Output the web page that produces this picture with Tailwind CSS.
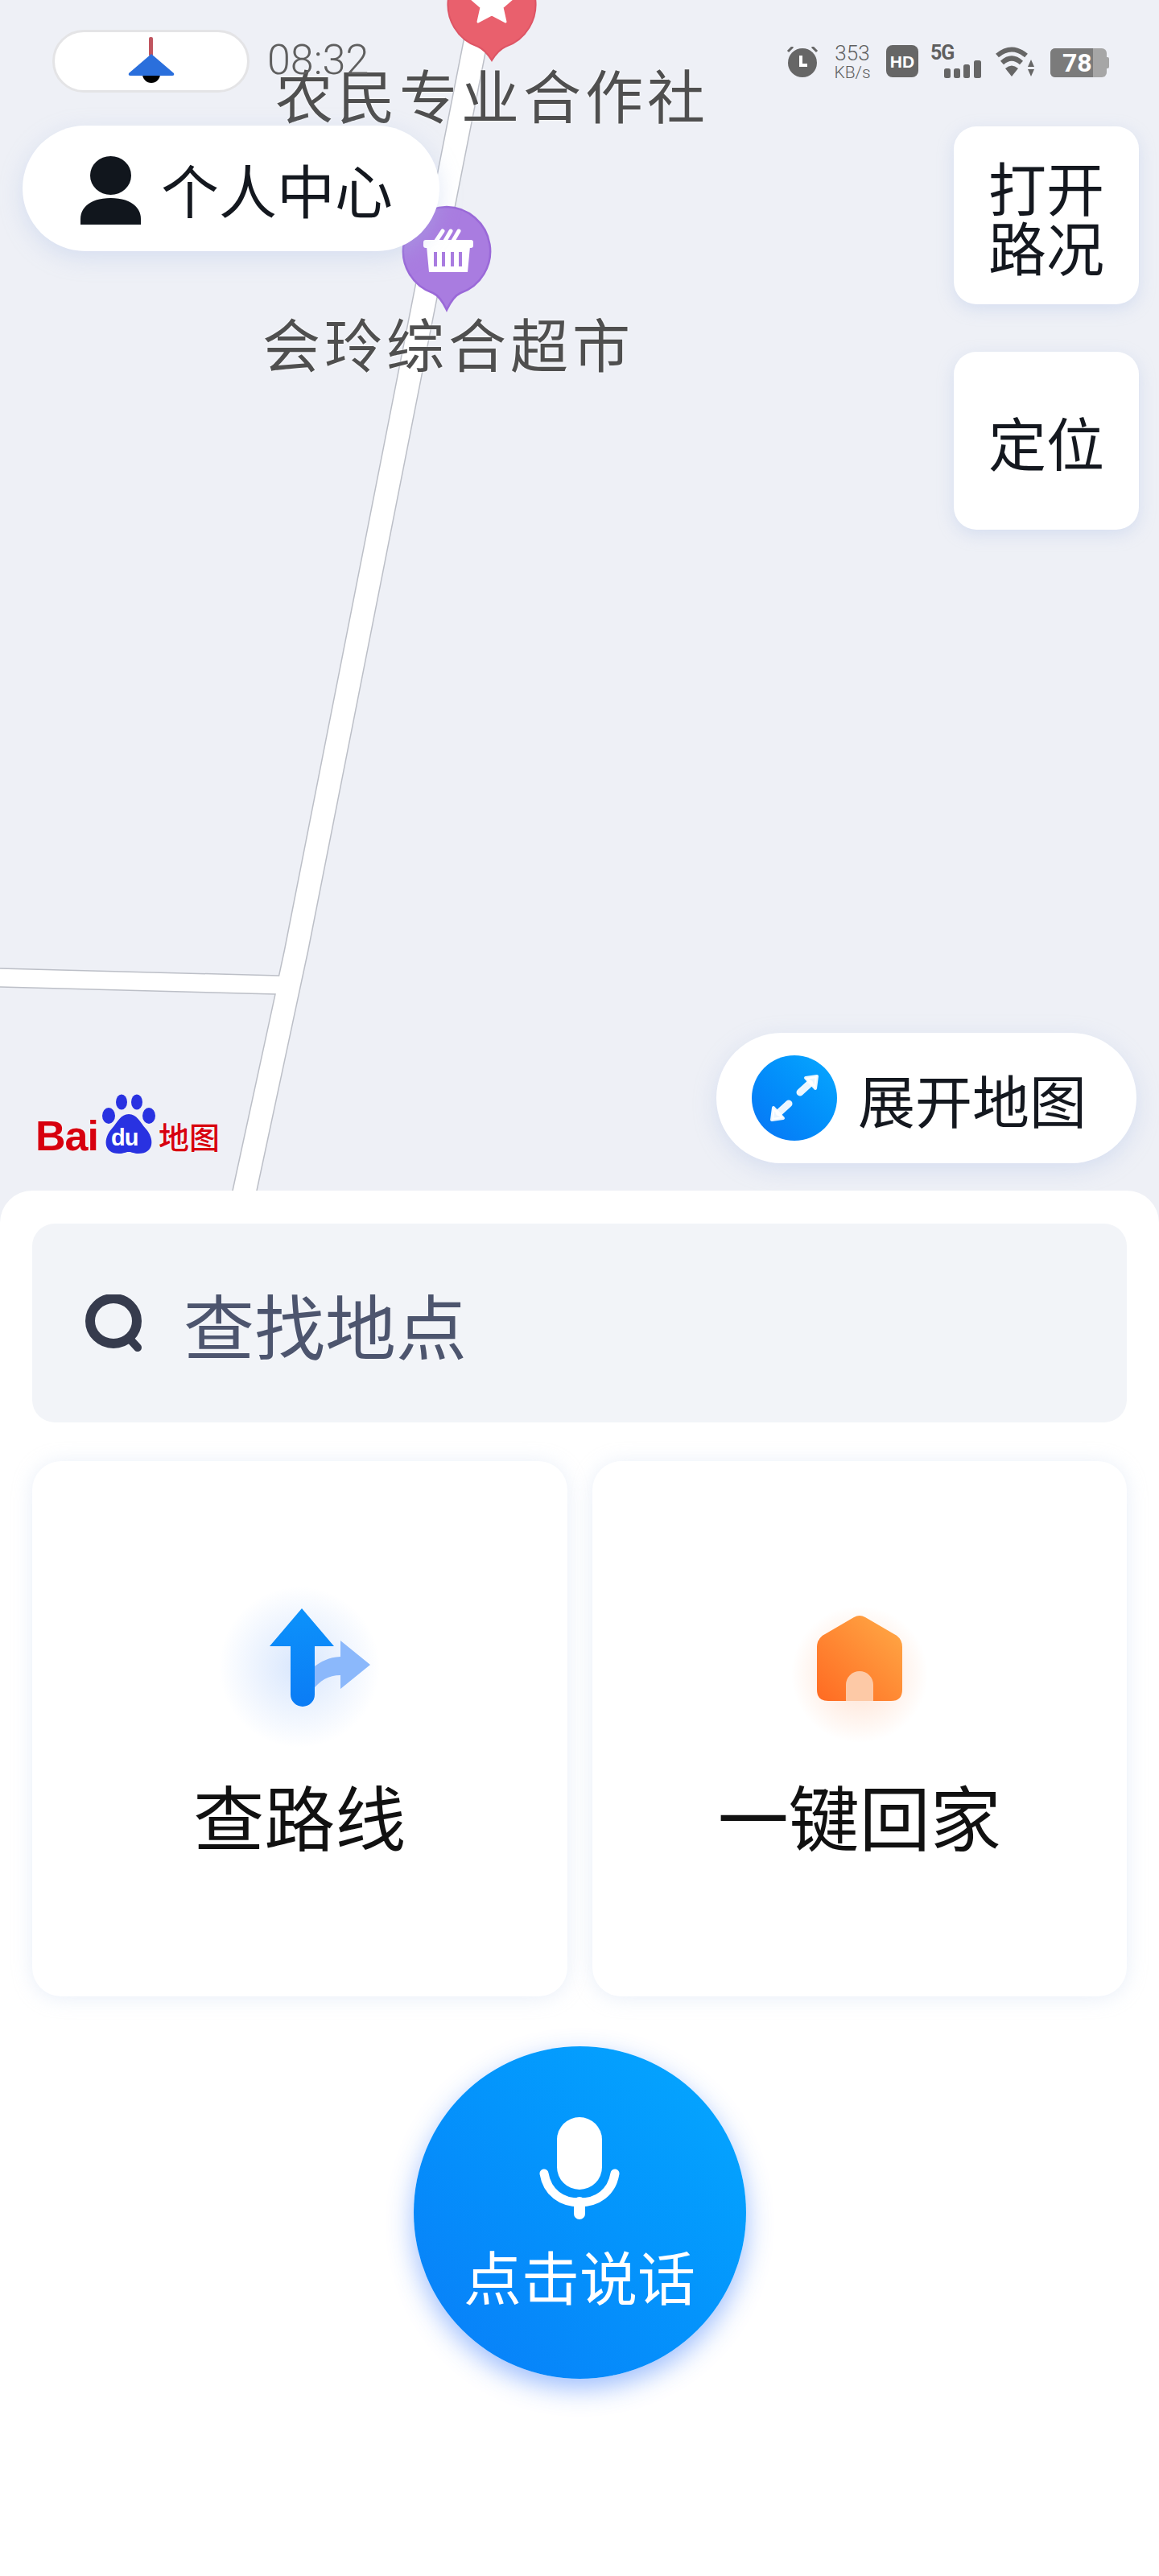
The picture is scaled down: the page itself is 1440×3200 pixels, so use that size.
<!DOCTYPE html>
<html lang="zh-CN">
<head>
    <meta charset="UTF-8">
    <meta name="viewport" content="width=device-width, initial-scale=1.0">
    <title>地图</title>
    <script src="https://cdn.jsdelivr.net/npm/@tailwindcss/browser@4"></script>
</head>
<body class="bg-white">
<div class="w-[1440px] h-[3200px] overflow-hidden bg-white font-['Noto_Sans_CJK_SC',sans-serif]">

    <!-- Map -->
    <div class="relative h-[1520px] bg-[#eef0f6] overflow-hidden">
        <svg class="absolute left-0 top-0" width="1440" height="1520" viewBox="0 0 1440 1520">
            <!-- roads -->
            <polygon points="586,0 616,0 383,1180 319,1479 311,1520 281,1520 289,1479 353.500,1180" fill="#ffffff"/>
            <polygon points="0,1203 352,1212 350,1235 0,1226" fill="#ffffff"/>
            <path d="M586 0 L353.500 1180 L346.600 1212 L0 1203 M0 1226 L342 1235 L289 1479 L281 1520 M616 0 L383 1180 L319 1479 L311 1520" fill="none" stroke="#bcbfc7" stroke-width="1.500"/>
            <!-- red pin -->
            <path d="M611 -50 a55.500 55.500 0 0 1 17 108 q-9 4 -17 17 q-8 -13 -17 -17 a55.500 55.500 0 0 1 17 -108 z" fill="#e9606d" stroke="#dd5565" stroke-width="2"/>
            <polygon points="611,-22 619,-5 638,-3 624,9 628,27 611,18 594,27 598,9 584,-3 603,-5" fill="#ffffff" stroke="#ffffff" stroke-width="3" stroke-linejoin="round"/>
            <!-- purple pin -->
            <path d="M555 257 a55 55 0 0 1 17 107 q-9 4 -17 21 q-8 -17 -17 -21 a55 55 0 0 1 17 -107 z" fill="#a97ce0" stroke="#9a69d8" stroke-width="2.500"/>
            <path d="M542 299 L550 287 M553 299 L560 287 M563 299 L570 287" stroke="#ffffff" stroke-width="5" stroke-linecap="round"/>
            <rect x="526" y="298" width="62" height="10" rx="3" fill="#ffffff"/>
            <path d="M530 306 H584 L581 338 H533 Z" fill="#ffffff"/>
            <path d="M541 313 V331 M551 313 V331 M562 313 V331 M572 313 V331" stroke="#a97ce0" stroke-width="4"/>
        </svg>

        <!-- Map labels -->
        <div class="absolute left-[342px] top-[76px] text-[72px] leading-[80px] tracking-[5px] whitespace-nowrap text-[#4f4f4f] [text-shadow:0_0_3px_#ffffff]">农民专业合作社</div>
        <div class="absolute left-[326px] top-[385px] text-[72px] leading-[80px] tracking-[5px] whitespace-nowrap text-[#4f4f4f] [text-shadow:0_0_3px_#ffffff]">会玲综合超市</div>

        <!-- Status bar -->
        <div class="absolute left-[65px] top-[37px] w-[245px] h-[78px] rounded-full bg-white border-[3px] border-[#e4e4e6] flex items-center justify-center">
            <svg width="60" height="60" viewBox="0 0 60 60">
                <rect x="27" y="0" width="5" height="24" rx="2" fill="#c0555f"/>
                <circle cx="30" cy="46" r="11" fill="#000000"/>
                <path d="M30 21 L58 45 Q59 48 56 48 H4 Q1 48 2 45 Z" fill="#2a6fdc"/>
            </svg>
        </div>
        <div class="absolute left-[332px] top-[46px] font-['Roboto'] font-light text-[52px] leading-[58px] text-[#5f5f5f]">08:32</div>

        <div class="absolute left-[977px] top-[54px] flex items-start text-[#5f5f5f]">
            <!-- alarm -->
            <svg class="mt-[4px]" width="40" height="38" viewBox="0 0 40 38">
                <circle cx="20" cy="20" r="18" fill="#666666"/>
                <path d="M2 6 L8 0 M38 6 L32 0" stroke="#666666" stroke-width="3"/>
                <path d="M18 11 V23 H26" fill="none" stroke="#ffffff" stroke-width="4"/>
            </svg>
            <div class="ml-[18px] w-[48px] flex flex-col items-center font-['Roboto'] font-light">
                <span class="text-[26px] leading-[24px]">353</span>
                <span class="text-[21px] leading-[22px] mt-[1px]">KB/s</span>
            </div>
            <div class="ml-[18px] mt-[2px] w-[40px] h-[40px] rounded-[8px] bg-[#666666] flex items-center justify-center text-white font-['Liberation_Sans'] font-bold text-[21px] leading-none">HD</div>
            <div class="relative ml-[15px] w-[63px] h-[42px]">
                <span class="absolute left-0 top-0 font-['Roboto'] font-bold text-[25px] leading-[24px] tracking-[-1px]">5G</span>
                <svg class="absolute left-[17px] top-[21px]" width="46" height="22" viewBox="0 0 46 22">
                    <rect x="0" y="10" width="8" height="12" rx="2.500" fill="#666666"/>
                    <rect x="12" y="10" width="8" height="12" rx="2.500" fill="#666666"/>
                    <rect x="24" y="5" width="8" height="17" rx="2.500" fill="#666666"/>
                    <rect x="37" y="0" width="9" height="22" rx="2.500" fill="#666666"/>
                </svg>
            </div>
            <!-- wifi -->
            <svg class="ml-[18px] mt-[4px]" width="48" height="38" viewBox="0 0 48 38">
                <path d="M2 11 Q20 -4 38 11 M8 20 Q20 9 32 20" fill="none" stroke="#666666" stroke-width="6"/>
                <path d="M12 27 Q20 20 28 27 L20 37 Z" fill="#666666"/>
                <path d="M44 16 L48 25 H40 Z M40 28 H48 L44 37 Z" fill="#666666"/>
            </svg>
            <!-- battery -->
            <div class="ml-[20px] mt-[6px] flex items-center">
                <div class="relative w-[70px] h-[36px] rounded-[6px] bg-[#a6a6a6] overflow-hidden">
                    <div class="w-[53px] h-full bg-[#7b7b7b]"></div>
                    <span class="absolute left-[15px] top-0 font-['Roboto'] font-bold text-[32px] leading-[36px] text-white">78</span>
                </div>
                <div class="w-[3px] h-[14px] rounded-r-[2px] bg-[#a6a6a6]"></div>
            </div>
        </div>

        <!-- 个人中心 -->
        <div class="absolute left-[28px] top-[156px] w-[518px] h-[156px] rounded-full bg-white shadow-[0_8px_28px_rgba(170,190,230,0.35)] flex items-center pl-[72px] gap-[25px] text-[72px] leading-none text-[#14181f]">
            <svg class="mt-[5px]" width="75" height="85" viewBox="0 0 75 85">
                <ellipse cx="37.500" cy="24" rx="25.500" ry="24" fill="#11161d"/>
                <path d="M0 85 V78 C0 62 15 52 37.500 52 C60 52 75 62 75 78 V85 Z" fill="#11161d"/>
            </svg>
            <span>个人中心</span>
        </div>

        <!-- Right buttons -->
        <div class="absolute left-[1185px] top-[157px] flex flex-col gap-[59px]">
            <div class="w-[230px] h-[221px] rounded-[28px] bg-white shadow-[0_6px_20px_rgba(170,190,230,0.35)] flex items-center justify-center text-center text-[72px] leading-[74px] text-[#14181f]">打开<br>路况</div>
            <div class="w-[230px] h-[221px] rounded-[28px] bg-white shadow-[0_6px_20px_rgba(170,190,230,0.35)] flex items-center justify-center text-[72px] leading-[75px] text-[#14181f]">定位</div>
        </div>

        <!-- Baidu logo -->
        <div class="absolute left-[44px] top-[1358px] w-[232px] h-[76px] [text-shadow:0_0_3px_#ffffff]">
            <span class="absolute left-0 top-[30px] font-['Liberation_Sans'] font-bold text-[52px] leading-[46px] tracking-[-1px] text-[#d7000f]">Bai</span>
            <svg class="absolute left-[82px] top-0" width="68" height="76" viewBox="0 0 68 76">
                <ellipse cx="25" cy="11" rx="7" ry="9.500" fill="#2932e1"/>
                <ellipse cx="44" cy="11" rx="7" ry="9.500" fill="#2932e1"/>
                <ellipse cx="9" cy="28" rx="8" ry="10" fill="#2932e1"/>
                <ellipse cx="59" cy="28" rx="8" ry="10" fill="#2932e1"/>
                <path d="M34 26 C44 26 48 36 55 44 C66 56 66 75 46 75 C40 75 38 73 34 73 C30 73 28 75 22 75 C2 75 2 56 13 44 C20 36 24 26 34 26 Z" fill="#2932e1"/>
            </svg>
            <span class="absolute left-[94px] top-[41px] font-['Liberation_Sans'] font-bold text-[29px] leading-[28px] tracking-[-1px] text-white [text-shadow:none]">du</span>
            <span class="absolute left-[153px] top-[30px] font-medium text-[38px] leading-[46px] text-[#d7000f]">地图</span>
        </div>

        <!-- 展开地图 -->
        <div class="absolute left-[890px] top-[1283px] w-[522px] h-[162px] rounded-full bg-white shadow-[0_8px_28px_rgba(170,190,230,0.35)] flex items-center pl-[44px] gap-[26px] text-[71px] leading-none text-[#14181f]">
            <div class="w-[106px] h-[106px] rounded-full bg-gradient-to-bl from-[#0aa8ff] to-[#0a74f5] flex items-center justify-center">
                <svg width="106" height="106" viewBox="0 0 106 106">
                    <path d="M60 46 L72 35 M46 60 L34 71" fill="none" stroke="#ffffff" stroke-opacity="0.92" stroke-width="9" stroke-linecap="round"/>
                    <path d="M67 28 L81 26 L79 41 Z M39 78 L25 80 L27 65 Z" fill="#ffffff" fill-opacity="0.92" stroke="#ffffff" stroke-opacity="0.92" stroke-width="4" stroke-linejoin="round"/>
                </svg>
            </div>
            <span>展开地图</span>
        </div>
    </div>

    <!-- Bottom sheet -->
    <div class="relative -mt-[41px] rounded-t-[40px] bg-white px-[40px] pt-[41px]">
        <div class="h-[247px] rounded-[28px] bg-[#f2f4f8] flex items-center pl-[66px] gap-[50px]">
            <svg width="72" height="72" viewBox="0 0 72 72">
                <ellipse cx="35" cy="33" rx="29" ry="28" fill="none" stroke="#363b4d" stroke-width="12"/>
                <path d="M54 54 L65 66" stroke="#363b4d" stroke-width="10" stroke-linecap="round"/>
            </svg>
            <span class="text-[88px] leading-none text-[#4d556e]">查找地点</span>
        </div>

        <div class="mt-[48px] grid grid-cols-2 gap-[31px]">
            <!-- 查路线 -->
            <div class="h-[665px] rounded-[36px] bg-white shadow-[0_2px_24px_rgba(190,205,235,0.35)] flex flex-col items-center">
                <svg class="mt-[106px]" width="300" height="280" viewBox="0 0 300 280">
                    <defs>
                        <radialGradient id="routeGlow">
                            <stop offset="0" stop-color="#4d8ff5" stop-opacity="0.22"/>
                            <stop offset="1" stop-color="#4d8ff5" stop-opacity="0"/>
                        </radialGradient>
                        <linearGradient id="routeArrow" x1="0" y1="0" x2="0" y2="1">
                            <stop offset="0" stop-color="#0c92fb"/>
                            <stop offset="1" stop-color="#0b7cf5"/>
                        </linearGradient>
                    </defs>
                    <circle cx="150" cy="150" r="100" fill="url(#routeGlow)"/>
                    <path d="M165 152 C178 142 186 138 201 137 V117 L238 147 L201 177 V160 C186 160 176 166 165 180 Z" fill="#8bb8fb"/>
                    <path d="M153 77 L193 124 H169 V184 A15 15 0 0 1 139 184 V124 H113 Z" fill="url(#routeArrow)"/>
                </svg>
                <span class="mt-[3px] text-[88px] leading-[100px] text-[#111111]">查路线</span>
            </div>
            <!-- 一键回家 -->
            <div class="h-[665px] rounded-[36px] bg-white shadow-[0_2px_24px_rgba(190,205,235,0.35)] flex flex-col items-center">
                <svg class="mt-[100px]" width="300" height="280" viewBox="0 0 300 280">
                    <defs>
                        <radialGradient id="homeGlow">
                            <stop offset="0" stop-color="#ff8a4a" stop-opacity="0.28"/>
                            <stop offset="1" stop-color="#ff8a4a" stop-opacity="0"/>
                        </radialGradient>
                        <linearGradient id="homeFill" x1="1" y1="0" x2="0" y2="1">
                            <stop offset="0" stop-color="#ffab47"/>
                            <stop offset="1" stop-color="#ff6a22"/>
                        </linearGradient>
                    </defs>
                    <circle cx="150" cy="165" r="85" fill="url(#homeGlow)"/>
                    <path d="M143 94 Q150 90 157 94 L193 115 Q203 120 203 131 V184 Q203 198 189 198 H111 Q97 198 97 184 V131 Q97 120 107 115 Z" fill="url(#homeFill)"/>
                    <path d="M133 198 V178 A17 17 0 0 1 167 178 V198 Z" fill="#fdc9a6"/>
                </svg>
                <span class="mt-[9px] text-[88px] leading-[100px] text-[#111111]">一键回家</span>
            </div>
        </div>

        <!-- Voice button -->
        <div class="mt-[62px] flex justify-center">
            <div class="w-[413px] h-[413px] rounded-full bg-gradient-to-bl from-[#06a8ff] to-[#0b7df8] shadow-[0_12px_32px_rgba(40,110,250,0.45)] flex flex-col items-center">
                <svg class="mt-[86px]" width="100" height="130" viewBox="0 0 100 130">
                    <rect x="22" y="2" width="56" height="90" rx="28" fill="#ffffff"/>
                    <path d="M6 72 C10 96 28 108 50 108 C72 108 90 96 94 72" fill="none" stroke="#ffffff" stroke-width="11" stroke-linecap="round"/>
                    <path d="M50 108 V122" stroke="#ffffff" stroke-width="14" stroke-linecap="round"/>
                </svg>
                <span class="mt-[28px] text-[72px] leading-[80px] text-white">点击说话</span>
            </div>
        </div>
    </div>
</div>
</body>
</html>
